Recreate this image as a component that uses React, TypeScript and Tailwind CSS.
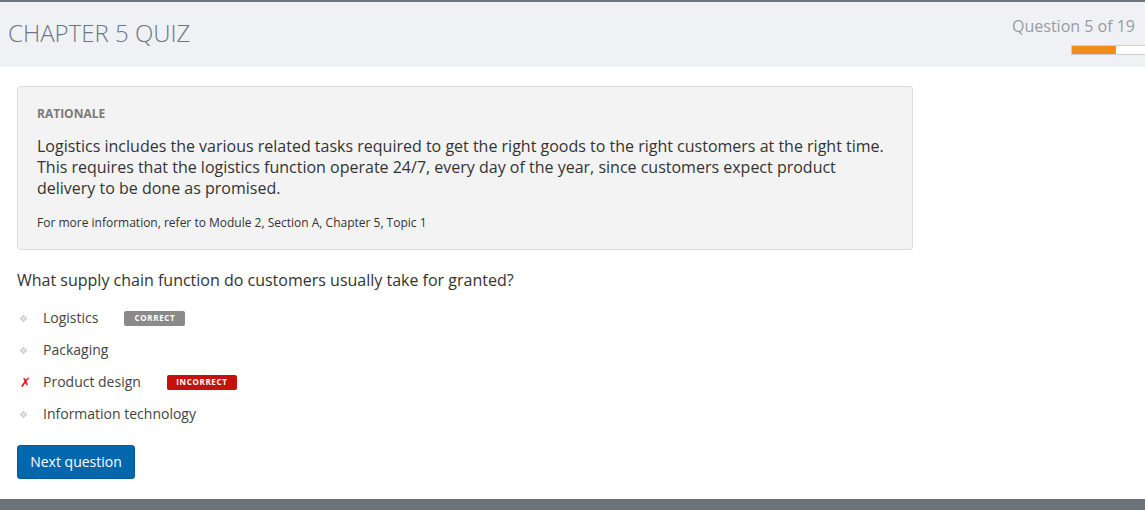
import React from "react";

const font = { fontFamily: '"Open Sans", "Noto Sans", sans-serif' };

function Bullet() {
  return (
    <span className="inline-flex w-[7px] h-[7px] items-center justify-center">
      <span className="block w-[5px] h-[5px] rotate-45 border border-[#c8c8c8] bg-[#e6e6e6]" />
    </span>
  );
}

function Option({
  label,
  mark,
  badge,
}: {
  label: string;
  mark?: "x";
  badge?: { text: string; cls: string; ml: string };
}) {
  return (
    <div className="flex items-center h-[32px]">
      <div className="w-[26px] flex items-center pl-[3px]">
        {mark === "x" ? (
          <span className="text-[#e0121a] text-[13px] font-bold leading-none" style={{ fontFamily: '"DejaVu Sans", sans-serif' }}>
            ✗
          </span>
        ) : (
          <Bullet />
        )}
      </div>
      <span className="text-[14px] text-[#444] leading-none">{label}</span>
      {badge && (
        <span
          className={`${badge.ml} ${badge.cls} text-white text-[8px] font-bold tracking-[0.08em] leading-none h-[15px] flex items-center justify-center rounded-[2px]`}
        >
          {badge.text}
        </span>
      )}
    </div>
  );
}

export default function App() {
  return (
    <div className="w-[1145px] h-[510px] bg-white flex flex-col overflow-hidden" style={font}>
      <div className="h-[2px] bg-[#6b737b]" />
      <div className="h-[65px] bg-[#f0f1f4] flex items-start justify-between">
        <h1 className="pl-[8px] pt-[16px] text-[24px] font-light text-[#6d7680] leading-[30px]">
          CHAPTER 5 QUIZ
        </h1>
        <div className="flex flex-col items-end pt-[13px]">
          <div className="pr-[10px] text-[16px] text-[#959ca4] leading-[22px]">Question 5 of 19</div>
          <div className="mt-[8px] w-[74px] h-[10px] border border-[#d0d0d0] border-r-0 bg-white flex">
            <div className="w-[44px] h-full bg-[#f28c1f]" />
          </div>
        </div>
      </div>

      <div className="pl-[17px] pt-[19px] flex-1">
        <div className="w-[896px] h-[164px] bg-[#f3f3f3] border border-[#dedede] rounded-[3px] pl-[19px] pt-[19px]">
          <div className="text-[12px] font-bold text-[#7a7a7a] leading-[16px]">RATIONALE</div>
          <p className="mt-[14px] text-[16px] text-[#333] leading-[21px]">
            Logistics includes the various related tasks required to get the right goods to the right customers at the right time.
            <br />
            This requires that the logistics function operate 24/7, every day of the year, since customers expect product
            <br />
            delivery to be done as promised.
          </p>
          <p className="mt-[16px] text-[12px] text-[#333] leading-[16px]">
            For more information, refer to Module 2, Section A, Chapter 5, Topic 1
          </p>
        </div>

        <div className="mt-[19px] text-[16px] text-[#333] leading-[22px]">
          What supply chain function do customers usually take for granted?
        </div>

        <div className="mt-[11px] flex flex-col">
          <Option label="Logistics" badge={{ text: "CORRECT", cls: "bg-[#8a8a8a] w-[61px]", ml: "ml-[26px]" }} />
          <Option label="Packaging" />
          <Option label="Product design" mark="x" badge={{ text: "INCORRECT", cls: "bg-[#c4120b] w-[70px]", ml: "ml-[26px]" }} />
          <Option label="Information technology" />
        </div>

        <button className="mt-[15px] h-[34px] w-[118px] bg-[#0267ad] border border-[#02589a] rounded-[3px] text-white text-[14px] leading-none">
          Next question
        </button>
      </div>

      <div className="h-[11px] bg-[#6b737b]" />
    </div>
  );
}
